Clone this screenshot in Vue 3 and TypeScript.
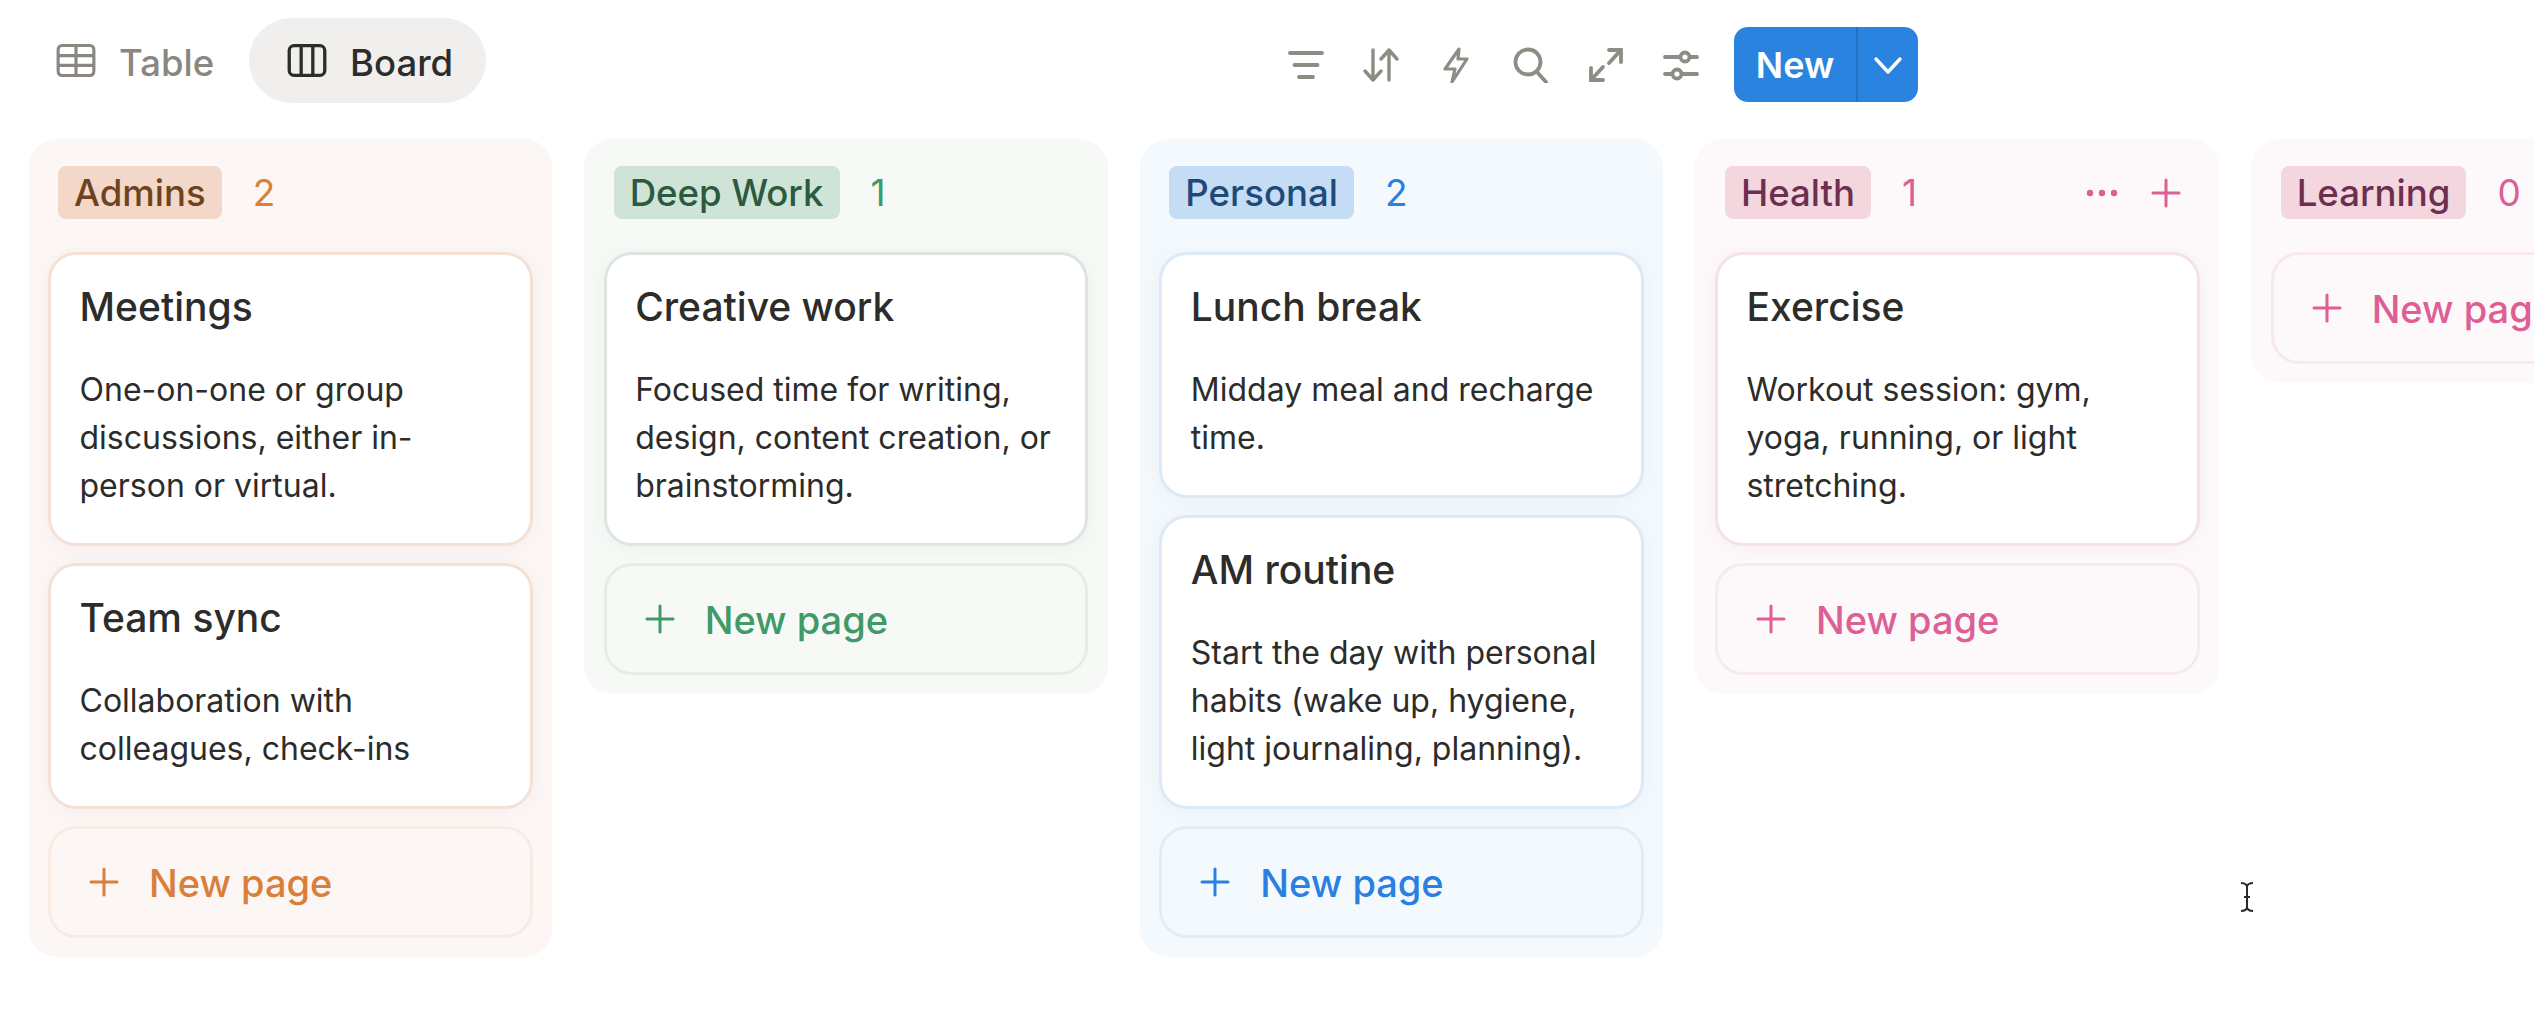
<script setup lang="ts">
interface Card { title: string; lines: string[] }
interface Column {
  name: string; count: number; theme: string; cards: Card[]; actions?: boolean;
}
const columns: Column[] = [
  { name: 'Admins', count: 2, theme: 'orange', cards: [
    { title: 'Meetings', lines: ['One-on-one or group', 'discussions, either in-', 'person or virtual.'] },
    { title: 'Team sync', lines: ['Collaboration with', 'colleagues, check-ins'] },
  ] },
  { name: 'Deep Work', count: 1, theme: 'green', cards: [
    { title: 'Creative work', lines: ['Focused time for writing,', 'design, content creation, or', 'brainstorming.'] },
  ] },
  { name: 'Personal', count: 2, theme: 'blue', cards: [
    { title: 'Lunch break', lines: ['Midday meal and recharge', 'time.'] },
    { title: 'AM routine', lines: ['Start the day with personal', 'habits (wake up, hygiene,', 'light journaling, planning).'] },
  ] },
  { name: 'Health', count: 1, theme: 'pink', actions: true, cards: [
    { title: 'Exercise', lines: ['Workout session: gym,', 'yoga, running, or light', 'stretching.'] },
  ] },
  { name: 'Learning', count: 0, theme: 'pink', cards: [] },
];
</script>

<template>
  <div class="page">
    <header class="toolbar">
      <div class="tabs">
        <div class="tab">
          <svg class="tab-icon" viewBox="0 0 40 34" fill="none" stroke="currentColor" stroke-width="3.200">
            <rect x="1.600" y="1.600" width="36.800" height="30.800" rx="4" />
            <path d="M1.600 12h36.800M1.600 22h36.800M20 1.600v30.800" />
          </svg>
          <span class="tab-label">Table</span>
        </div>
        <div class="tab active">
          <svg class="tab-icon" viewBox="0 0 40 34" fill="none" stroke="currentColor" stroke-width="3.400">
            <rect x="1.700" y="1.700" width="36.600" height="30.600" rx="5" />
            <path d="M14 1.700v30.600M26 1.700v30.600" />
          </svg>
          <span class="tab-label">Board</span>
        </div>
      </div>
      <div class="tools">
        <svg class="tool" viewBox="0 0 36 36" fill="none" stroke="currentColor" stroke-width="3.800" stroke-linecap="round">
          <path d="M2 6h32M6.500 18h23M11 30h14" />
        </svg>
        <svg class="tool" viewBox="0 0 36 36" fill="none" stroke="currentColor" stroke-width="3.400" stroke-linecap="round" stroke-linejoin="round">
          <path d="M10 3v30M2 24l8 9 8-9M26 33V3M18 12l8-9 8 9" />
        </svg>
        <svg class="tool" viewBox="0 0 36 36" fill="none" stroke="currentColor" stroke-width="3.200" stroke-linejoin="round">
          <path d="M21 2 7 22h10l-3 13 15-23H20z" />
        </svg>
        <svg class="tool" viewBox="0 0 36 36" fill="none" stroke="currentColor" stroke-width="3.800" stroke-linecap="round">
          <circle cx="15" cy="15" r="12.500" />
          <path d="m24 25 9 10" />
        </svg>
        <svg class="tool" viewBox="0 0 36 36" fill="none" stroke="currentColor" stroke-width="3.800" stroke-linecap="round">
          <path d="M21 3h12v12M33 3 21 16M15 33H3V21M3 33l12-13" />
        </svg>
        <svg class="tool" viewBox="0 0 36 36" fill="none" stroke="currentColor" stroke-width="3.800" stroke-linecap="round">
          <path d="M2 10h15M27 10h7M2 27h7M19 27h15" />
          <circle cx="22" cy="10" r="4.500" />
          <circle cx="14" cy="27" r="4.500" />
        </svg>
        <div class="new-btn">
          <span class="new-label">New</span>
          <span class="new-caret">
            <svg viewBox="0 0 30 20" fill="none" stroke="currentColor" stroke-width="3.400" stroke-linecap="round" stroke-linejoin="round">
              <path d="m3 4 12 13L27 4" />
            </svg>
          </span>
        </div>
      </div>
    </header>

    <main class="board">
      <section v-for="col in columns" :key="col.name" class="column" :class="col.theme">
        <div class="col-head">
          <span class="tag">{{ col.name }}</span>
          <span class="count">{{ col.count }}</span>
          <div v-if="col.actions" class="col-actions">
            <svg class="dots" viewBox="0 0 32 8" fill="currentColor">
              <circle cx="4" cy="4" r="3.200" /><circle cx="16" cy="4" r="3.200" /><circle cx="28" cy="4" r="3.200" />
            </svg>
            <svg class="plus" viewBox="0 0 30 30" fill="none" stroke="currentColor" stroke-width="3" stroke-linecap="round">
              <path d="M15 2v26M2 15h26" />
            </svg>
          </div>
        </div>
        <div class="stack">
          <article v-for="card in col.cards" :key="card.title" class="card">
            <h3>{{ card.title }}</h3>
            <p><span v-for="line in card.lines" :key="line" class="line">{{ line }}</span></p>
          </article>
          <div class="new-page">
            <svg class="plus" viewBox="0 0 30 30" fill="none" stroke="currentColor" stroke-width="3" stroke-linecap="round">
              <path d="M15 2v26M2 15h26" />
            </svg>
            <span class="new-page-label">New page</span>
          </div>
        </div>
      </section>
    </main>

    <svg class="cursor" viewBox="0 0 16 32" fill="none" stroke="#2b2b2b" stroke-width="2">
      <path d="M2 2c3 0 5 1 6 3 1-2 3-3 6-3M8 5v22M2 30c3 0 5-1 6-3 1 2 3 3 6 3M5 16h6" />
    </svg>
  </div>
</template>

<style>
html, body { margin: 0; background: #fff; }
</style>

<style scoped>
.page {
  position: relative;
  width: 2534px;
  height: 1020px;
  overflow: hidden;
  background: #fff;
  font-family: Inter, "Liberation Sans", sans-serif;
  color: #2c2c2b;
}
.toolbar {
  display: flex;
  align-items: flex-start;
  justify-content: space-between;
  height: 139px;
  padding: 18px 616px 0 38px;
  box-sizing: border-box;
}
.tabs { display: flex; align-items: center; gap: 3px; }
.tab {
  display: flex;
  align-items: center;
  gap: 23px;
  height: 85px;
  padding: 0 32px 0 18px;
  border-radius: 43px;
  font-size: 36.500px;
  font-weight: 500;
  color: #8a8781;
  box-sizing: border-box;
}
.tab.active { background: #f0efed; color: #2c2c2b; padding: 0 33px 0 38px; }
.tab-label { padding-top: 4px; }
.tab-icon { width: 40px; height: 33px; flex: none; }
.tools { display: flex; align-items: center; gap: 39px; margin-top: 9px; }
.tool { width: 36px; height: 36px; color: #8f8b85; flex: none; }
.new-btn {
  display: flex;
  height: 75px;
  width: 184px;
  margin-left: -4px;
  border-radius: 14px;
  background: #2b83e0;
  color: #fff;
  overflow: hidden;
  font-size: 36px;
  font-weight: 600;
}
.new-label { width: 122px; display: flex; align-items: center; justify-content: center; border-right: 2px solid #2570c2; }
.new-caret { flex: 1; display: flex; align-items: center; justify-content: center; }
.new-caret svg { width: 30px; height: 20px; }

.board { display: flex; align-items: flex-start; gap: 32px; padding-left: 28.500px; }
.column {
  width: 523.670px;
  flex: none;
  box-sizing: border-box;
  border-radius: 28px;
  overflow: hidden;
  background: var(--col);
}
.col-head {
  display: flex;
  align-items: flex-start;
  height: 108px;
  padding: 27px 38px 0 29.500px;
  gap: 31px;
  box-sizing: border-box;
}
.tag {
  height: 53px;
  padding: 0 16px;
  display: flex;
  align-items: center;
  border-radius: 8px;
  background: var(--tag);
  color: var(--tag-text);
  font-size: 36.600px;
  font-weight: 500;
}
.count { font-size: 37px; line-height: 53px; color: var(--accent); }
.col-actions { margin-left: auto; display: flex; align-items: center; height: 53px; gap: 33px; color: var(--accent); }
.dots { width: 32px; height: 8px; }
.plus { width: 30px; height: 30px; color: var(--accent); flex: none; }
.stack {
  display: flex;
  flex-direction: column;
  gap: 17px;
  padding: 5px 19.500px 19px;
  overflow: hidden;
}
.card {
  background: #fff;
  border: 3px solid var(--line);
  border-radius: 28px;
  padding: 27px 28.500px 33px;
  box-shadow: 0 2px 22px rgba(50, 45, 40, 0.04);
}
.card h3 { margin: 0; font-size: 39px; line-height: 50px; font-weight: 500; }
.card p { margin: 34px 0 0; font-size: 32px; line-height: 48px; font-weight: 400; }
.line { display: block; white-space: nowrap; }
.new-page {
  display: flex;
  align-items: center;
  gap: 30px;
  height: 112px;
  padding: 0 38px;
  box-sizing: border-box;
  border: 3px solid var(--line-soft);
  border-radius: 28px;
  font-size: 38px;
  font-weight: 500;
  color: var(--accent);
  white-space: nowrap;
}
.new-page-label { padding-top: 1px; }
.orange { --col: #fcf7f4; --tag: #f3d8ca; --tag-text: #6f4320; --accent: #d97f3b; --line: #f5e0d5; --line-soft: #f7ebe3; }
.green { --col: #f6f9f6; --tag: #cfe3d6; --tag-text: #2c5a3f; --accent: #3f9a68; --line: #dde5e0; --line-soft: #e5ede7; }
.blue { --col: #f4f9fd; --tag: #c5dcf5; --tag-text: #1e4a7a; --accent: #2a80e0; --line: #dce9f6; --line-soft: #e3edf6; }
.pink { --col: #fdf8fa; --tag: #f4d6df; --tag-text: #6d2f50; --accent: #dc5f96; --line: #f6e1e9; --line-soft: #f7e9ee; }
.cursor { position: absolute; left: 2239px; top: 881px; width: 16px; height: 32px; }
</style>
